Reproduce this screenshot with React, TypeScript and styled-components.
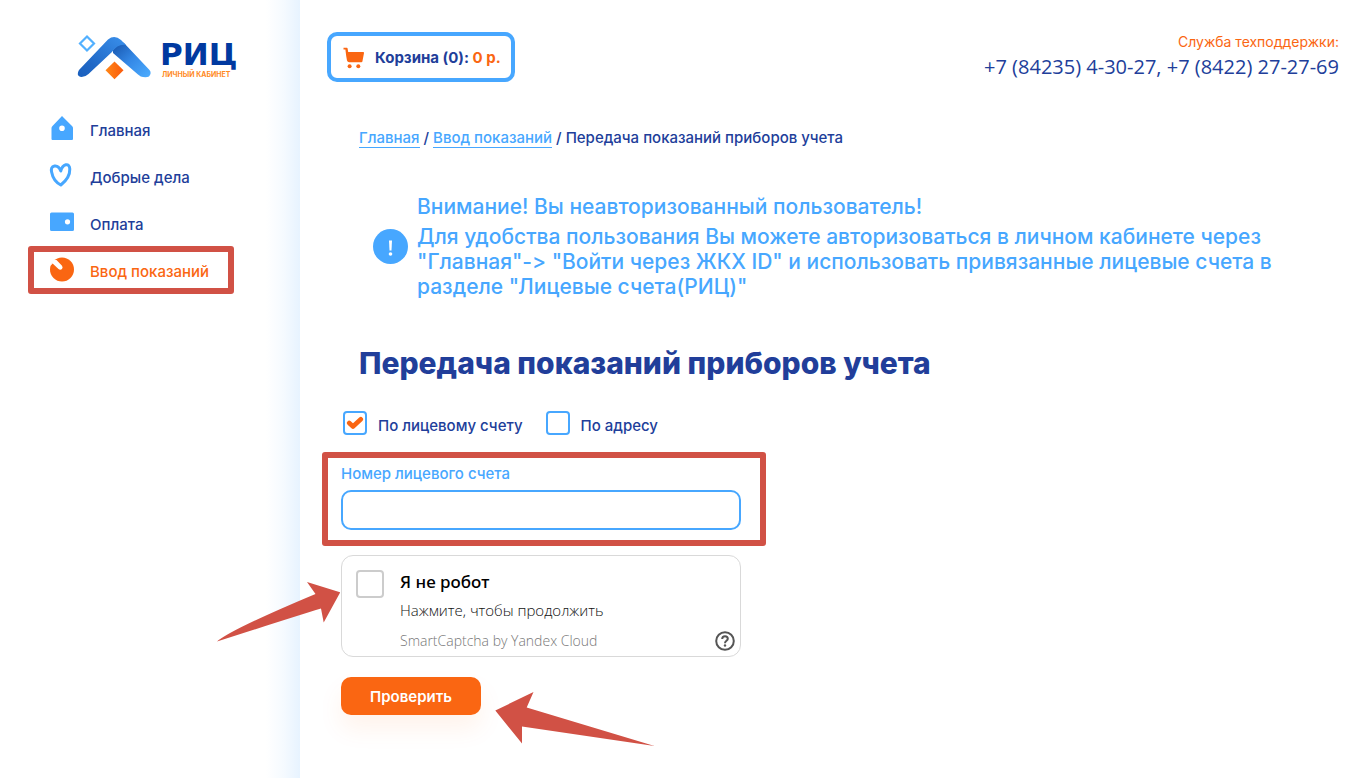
import React, { useState } from 'react';
import styled, { createGlobalStyle } from 'styled-components';

const c = {
  navy: '#213e9a',
  sky: '#47a7ff',
  orange: '#fa6612',
  mark: '#d15145',
};

const GlobalStyle = createGlobalStyle`
  *, *::before, *::after { box-sizing: border-box; }
  body {
    margin: 0;
    background: #fff;
    color: ${c.navy};
    font-family: Inter, "Open Sans", sans-serif;
    font-size: 15px;
    font-weight: 500;
    font-variant-ligatures: none;
  }
`;

const Page = styled.div`
  display: flex;
  min-height: 100vh;
`;

const Sidebar = styled.aside`
  flex: 0 0 300px;
  padding: 32px 0 0 48px;
  background: linear-gradient(to left, #e7f3ff 0, #f5faff 16px, #fff 34px);
`;

const Logo = styled.a`
  display: flex;
  align-items: flex-start;
  gap: 8px;
  height: 48px;
  margin-left: 28px;
  text-decoration: none;
`;

const LogoText = styled.span`
  display: flex;
  flex-direction: column;
  padding-top: 5px;
`;

const LogoName = styled.span`
  color: #0039a0;
  font-family: "DejaVu Sans", sans-serif;
  font-size: 31px;
  font-weight: 700;
  line-height: 34px;
`;

const LogoTag = styled.span`
  padding-left: 2px;
  color: #ff8a1f;
  font-size: 7px;
  font-weight: 700;
  line-height: 8px;
  text-transform: uppercase;
  white-space: nowrap;
`;

const Nav = styled.nav`
  display: flex;
  flex-direction: column;
  margin-top: 26px;
`;

const NavLink = styled.a<{ $active?: boolean }>`
  position: relative;
  display: flex;
  align-items: center;
  gap: 16px;
  height: 47px;
  color: ${(p) => (p.$active ? c.orange : c.navy)};
  line-height: 20px;
  text-decoration: none;

  svg { flex: none; margin-bottom: 4px; }
  span { padding-top: 2px; }
`;

const Highlight = styled.span<{ $inset: string }>`
  position: absolute;
  inset: ${(p) => p.$inset};
  border: 6px solid ${c.mark};
  border-radius: 3px;
  pointer-events: none;
`;

const Main = styled.main`
  flex: 1;
  min-width: 0;
  padding: 32px 17px 40px 27px;
`;

const Header = styled.header`
  display: flex;
  justify-content: space-between;
  align-items: flex-start;
`;

const Cart = styled.a`
  display: flex;
  align-items: center;
  gap: 10px;
  height: 50px;
  padding: 2px 10px 0 12px;
  border: 4px solid ${c.sky};
  border-radius: 10px;
  color: ${c.navy};
  font-weight: 700;
  line-height: 20px;
  text-decoration: none;
  white-space: nowrap;
`;

const Price = styled.span`
  color: ${c.orange};
`;

const Support = styled.div`
  display: flex;
  flex-direction: column;
  align-items: flex-end;
`;

const SupportLabel = styled.span`
  color: ${c.orange};
  font-size: 14px;
  font-weight: 400;
  line-height: 20px;
`;

const Phones = styled.span`
  font-family: "Open Sans", sans-serif;
  font-size: 20px;
  font-weight: 500;
  line-height: 30px;
`;

const Crumbs = styled.nav`
  margin: 46px 0 0 32px;
  line-height: 20px;
`;

const CrumbLink = styled.a`
  display: inline-block;
  border-bottom: 1px solid ${c.sky};
  color: ${c.sky};
  line-height: 18px;
  text-decoration: none;
`;

const Notice = styled.section`
  display: flex;
  align-items: center;
  gap: 9px;
  max-width: 980px;
  margin: 46px 0 0 46px;
  color: ${c.sky};
`;

const NoticeText = styled.div`
  font-size: 21px;
  line-height: 25px;

  p { margin: 0 0 5px; }
  p:last-child { margin: 0; }
`;

const Title = styled.h1`
  margin: 46px 0 0 32px;
  font-size: 30px;
  font-weight: 800;
  line-height: 36px;
`;

const Form = styled.form`
  width: 400px;
  margin-left: 14px;
`;

const Choices = styled.div`
  display: flex;
  gap: 23px;
  margin: 30px 0 0 2px;
`;

const Choice = styled.label`
  display: flex;
  align-items: flex-start;
  gap: 11px;
  line-height: 30px;
  white-space: nowrap;
`;

const TickWrap = styled.span`
  display: grid;
  place-items: center;

  > * { grid-area: 1 / 1; }
  svg { pointer-events: none; }
`;

const Tick = styled.input<{ $size: number; $color: string }>`
  appearance: none;
  width: ${(p) => p.$size}px;
  height: ${(p) => p.$size}px;
  margin: 0;
  border: 2px solid ${(p) => p.$color};
  border-radius: 4px;
  background: #fff;
`;

const Field = styled.div`
  position: relative;
  display: flex;
  flex-direction: column;
  gap: 6px;
  margin-top: 23px;
`;

const FieldLabel = styled.label`
  color: ${c.sky};
  line-height: 20px;
`;

const TextInput = styled.input`
  width: 100%;
  height: 40px;
  padding: 0 12px;
  border: 2px solid ${c.sky};
  border-radius: 10px;
  color: ${c.navy};
  font: inherit;
`;

const Captcha = styled.div`
  position: relative;
  display: flex;
  gap: 16px;
  height: 102px;
  margin-top: 25px;
  padding: 14px 5px 5px 14px;
  border: 1px solid #d9d9d9;
  border-radius: 12px;
  font-family: "Open Sans", sans-serif;
  font-weight: 300;
`;

const CaptchaText = styled.div`
  flex: 1;
  display: flex;
  flex-direction: column;
  font-size: 14px;
  line-height: 20px;
`;

const CaptchaTitle = styled.label`
  color: #000;
  font-family: "Noto Sans", sans-serif;
  font-size: 17px;
  font-weight: 500;
  line-height: 24px;
`;

const CaptchaHint = styled.span`
  margin-top: 6px;
  color: #111;
  font-size: 15px;
`;

const CaptchaBrand = styled.span`
  margin-top: 11px;
  color: #777;
`;

const HelpButton = styled.button`
  align-self: flex-end;
  display: flex;
  padding: 0;
  border: 0;
  background: none;
`;

const Actions = styled.div`
  position: relative;
  margin-top: 20px;
`;

const Submit = styled.button`
  width: 140px;
  height: 38px;
  padding: 0;
  border: 0;
  border-radius: 10px;
  background: ${c.orange};
  box-shadow: 0 14px 24px rgba(250, 102, 18, 0.08);
  color: #fff;
  font: inherit;
  font-weight: 600;
`;

const Arrow = styled.svg<{ $left: number; $top: number }>`
  position: absolute;
  left: ${(p) => p.$left}px;
  top: ${(p) => p.$top}px;
  fill: ${c.mark};
  pointer-events: none;
`;

const LogoMark = () => (
  <svg width="76" height="48" viewBox="0 0 76 48" aria-hidden="true">
    <defs>
      <linearGradient id="leftWing" x1="0" y1="1" x2="1" y2="0">
        <stop offset="0" stopColor="#1a5fbd" />
        <stop offset="0.3" stopColor="#2068c6" />
        <stop offset="1" stopColor="#3a90ec" />
      </linearGradient>
      <linearGradient id="rightWing" x1="0" y1="0" x2="1" y2="1">
        <stop offset="0" stopColor="#1450a8" />
        <stop offset="0.5" stopColor="#3488e6" />
        <stop offset="1" stopColor="#4dadff" />
      </linearGradient>
      <linearGradient id="gem" x1="0" y1="0" x2="1" y2="0">
        <stop offset="0" stopColor="#ff8717" />
        <stop offset="1" stopColor="#fa5a0c" />
      </linearGradient>
    </defs>
    <path d="M11 4.500 18 11.500 11 18.500 4 11.500Z" fill="none" stroke="#52b0ff" strokeWidth="2.200" />
    <path d="M37 18 44 9 48 11 73.500 38Q76 41 73 44.500Q71 45.500 67 45Q65 45 62 42.500L37 21Z" fill="url(#rightWing)" />
    <path d="M32 7.500Q38.500 2.500 45 8L50 13Q42 11.500 36 20L12.500 42Q9 45.500 4 44.800Q0 43 3 38Z" fill="url(#leftWing)" />
    <path d="M38.500 29.500 47.500 38.300 38.500 47.200 29.500 38.300Z" fill="url(#gem)" />
  </svg>
);

const HomeIcon = () => (
  <svg width="26" height="26" viewBox="0 0 26 26" aria-hidden="true">
    <path fillRule="evenodd" fill={c.sky} d="M14 1 24 11Q25 12 25 13V24Q25 25 24 25H4.500Q3.500 25 3.500 24V13Q3.500 12 4.500 11ZM14 10.400a2.800 2.800 0 1 0 0 5.600a2.800 2.800 0 1 0 0-5.600Z" />
  </svg>
);

const HeartIcon = () => (
  <svg width="26" height="26" viewBox="0 0 26 26" aria-hidden="true">
    <path fill="none" stroke={c.sky} strokeWidth="3" strokeLinejoin="round" d="M12.800 9C11.500 5.500 9 3.600 6.500 4C3.500 4.500 3 7 3.600 10C4.600 15.500 8 20.500 12.800 23C18.500 18.500 22 12.500 21.800 7C21.700 3.700 20 2.300 17.800 2.800C15 3.500 13.500 6 12.800 9Z" />
  </svg>
);

const WalletIcon = () => (
  <svg width="26" height="26" viewBox="0 0 26 26" aria-hidden="true">
    <path fillRule="evenodd" fill={c.sky} d="M3.500 3.500H24.500Q26 3.500 26 5V20.500Q26 22 24.500 22H3.500Q2 22 2 20.500V5Q2 3.500 3.500 3.500ZM19.500 10.200a2.600 2.600 0 1 0 0 5.200a2.600 2.600 0 1 0 0-5.200Z" />
  </svg>
);

const MeterIcon = () => (
  <svg width="26" height="26" viewBox="0 0 26 26" aria-hidden="true">
    <circle cx="14" cy="13.500" r="12" fill={c.orange} />
    <path fill="#fff" d="M2 10 5 3.500 8.500 4L14 9.700Q15.200 11.500 14 13Q12.200 14.500 10.500 13L4.600 7.500 2.800 9.500Z" />
  </svg>
);

const CartIcon = () => (
  <svg width="22" height="22" viewBox="0 0 22 22" fill={c.orange} aria-hidden="true">
    <path d="M0.500 0.800H3.800Q4.500 0.800 4.600 1.500L5.200 5H20.200Q21.200 5 21 6L19.400 14.400Q19.200 15.200 18.400 15.200H6.200Q4.500 15.200 4 13.600L3.200 9 2.400 2.600H0.500Z" />
    <circle cx="6.600" cy="19.200" r="2" />
    <circle cx="15.300" cy="19.200" r="2" />
  </svg>
);

const AlertMark = styled.svg`
  flex: none;
`;

const AlertIcon = () => (
  <AlertMark width="35" height="35" viewBox="0 0 35 35" aria-hidden="true">
    <circle cx="17.500" cy="17.500" r="17.500" fill={c.sky} />
    <path fill="#fff" d="M16 11.500H19L18.500 21.500H16.500Z" />
    <circle cx="17.500" cy="25" r="1.800" fill="#fff" />
  </AlertMark>
);

const CheckIcon = () => (
  <svg width="18" height="14" viewBox="0 0 18 14" aria-hidden="true">
    <path d="M3.200 7 7 10.500 14.800 3.200" fill="none" stroke={c.orange} strokeWidth="4.600" strokeLinecap="round" strokeLinejoin="round" />
  </svg>
);

const HelpIcon = () => (
  <svg width="20" height="20" viewBox="0 0 20 20" fill="none" stroke="#555" strokeWidth="2" aria-hidden="true">
    <circle cx="10" cy="10" r="8.800" />
    <path d="M7.200 8C7.200 6.200 8.300 5.200 10 5.200S12.800 6.200 12.800 7.800C12.800 9.800 10 9.800 10 12.200" />
    <circle cx="10" cy="14.500" r="1.200" fill="#555" stroke="none" />
  </svg>
);

const navItems = [
  { label: 'Главная', Icon: HomeIcon },
  { label: 'Добрые дела', Icon: HeartIcon },
  { label: 'Оплата', Icon: WalletIcon },
  { label: 'Ввод показаний', Icon: MeterIcon, active: true },
];

export default function App() {
  const [mode, setMode] = useState('account');
  const [account, setAccount] = useState('');

  return (
    <Page>
      <GlobalStyle />
      <Sidebar>
        <Logo href="#">
          <LogoMark />
          <LogoText>
            <LogoName>РИЦ</LogoName>
            <LogoTag>Личный кабинет</LogoTag>
          </LogoText>
        </Logo>
        <Nav>
          {navItems.map(({ label, Icon, active }) => (
            <NavLink key={label} href="#" $active={active}>
              <Icon />
              <span>{label}</span>
              {active && <Highlight $inset="-1px 66px 0 -20px" />}
            </NavLink>
          ))}
        </Nav>
      </Sidebar>

      <Main>
        <Header>
          <Cart href="#">
            <CartIcon />
            <span>
              Корзина (0): <Price>0 р.</Price>
            </span>
          </Cart>
          <Support>
            <SupportLabel>Служба техподдержки:</SupportLabel>
            <Phones>+7 (84235) 4-30-27, +7 (8422) 27-27-69</Phones>
          </Support>
        </Header>

        <Crumbs>
          <CrumbLink href="#">Главная</CrumbLink> / <CrumbLink href="#">Ввод показаний</CrumbLink> / Передача
          показаний приборов учета
        </Crumbs>

        <Notice>
          <AlertIcon />
          <NoticeText>
            <p>Внимание! Вы неавторизованный пользователь!</p>
            <p>
              Для удобства пользования Вы можете авторизоваться в личном кабинете через
              <br />
              "Главная"-&gt; "Войти через ЖКХ ID" и использовать привязанные лицевые счета в
              <br />
              разделе "Лицевые счета(РИЦ)"
            </p>
          </NoticeText>
        </Notice>

        <Title>Передача показаний приборов учета</Title>

        <Form onSubmit={(e) => e.preventDefault()}>
          <Choices>
            <Choice>
              <TickWrap>
                <Tick type="checkbox" $size={24} $color={c.sky} checked={mode === 'account'} onChange={() => setMode('account')} />
                {mode === 'account' && <CheckIcon />}
              </TickWrap>
              По лицевому счету
            </Choice>
            <Choice>
              <TickWrap>
                <Tick type="checkbox" $size={24} $color={c.sky} checked={mode === 'address'} onChange={() => setMode('address')} />
                {mode === 'address' && <CheckIcon />}
              </TickWrap>
              По адресу
            </Choice>
          </Choices>

          <Field>
            <FieldLabel htmlFor="account">Номер лицевого счета</FieldLabel>
            <TextInput id="account" value={account} onChange={(e) => setAccount(e.target.value)} />
            <Highlight $inset="-12px -25px -16px -19px" />
          </Field>

          <Captcha>
            <Tick id="robot" type="checkbox" $size={28} $color="#ccc" />
            <CaptchaText>
              <CaptchaTitle htmlFor="robot">Я не робот</CaptchaTitle>
              <CaptchaHint>Нажмите, чтобы продолжить</CaptchaHint>
              <CaptchaBrand>SmartCaptcha by Yandex Cloud</CaptchaBrand>
            </CaptchaText>
            <HelpButton type="button" aria-label="Справка">
              <HelpIcon />
            </HelpButton>
            <Arrow $left={-126} $top={25} width="124" height="62" viewBox="216 581 124 62">
              <path d="M217 641.500Q232 629 315.500 594L307 582 340.300 592.300 323.700 622.500 321 608.500Q290 618 217 641.500Z" />
            </Arrow>
          </Captcha>

          <Actions>
            <Submit type="submit">Проверить</Submit>
            <Arrow $left={153} $top={14} width="162" height="56" viewBox="494 691 162 56">
              <path d="M495.300 710.500 533.500 692 526.700 707.500 654.500 746 522 726.500 522 743.500Z" />
            </Arrow>
          </Actions>
        </Form>
      </Main>
    </Page>
  );
}
